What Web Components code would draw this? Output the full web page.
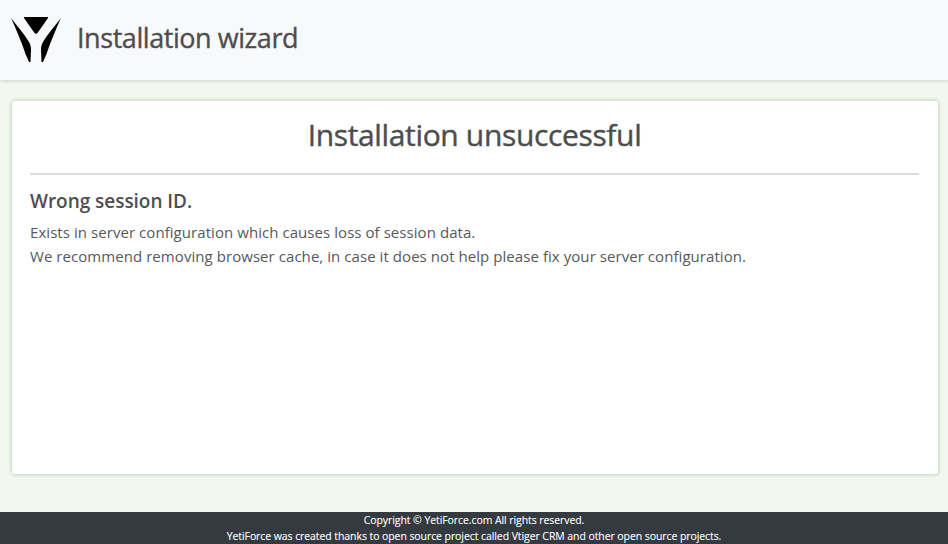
<!DOCTYPE html>
<html lang="en"><head><meta charset="utf-8"><title>Installation wizard</title>
<style>
html,body{margin:0;padding:0;height:100%}
body{font-family:"Open Sans","Noto Sans",sans-serif;color:#495057;background:#f3f8ee}
</style></head><body>
<template id="t-page"><style>
:host{display:flex;flex-direction:column;height:544px;overflow:hidden}
main{flex:1;display:flex;flex-direction:column;padding:21px 10px 38px 12px;min-height:0}
</style><slot name="header"></slot><main><slot></slot></main><slot name="footer"></slot></template>
<template id="t-header"><style>
:host{display:flex;align-items:center;gap:16px;height:80px;box-sizing:border-box;padding:0 0 4px 11px;background:#f8f9fa;box-shadow:0 1px 3px rgba(0,0,0,.16);position:relative;font-family:"Open Sans",sans-serif}
svg{display:block;flex:none;margin-top:4px}
h1{margin:0;font-size:27px;font-weight:400;color:#4d4d4d;letter-spacing:-.44px;line-height:1.2;-webkit-text-stroke:.35px #4d4d4d}
</style><svg width="50" height="46" viewBox="11 18 50 46"><path d="M25.500 17H46.500C48 17 48.600 18 47.800 19.200L37.500 34C36.700 35 35.300 35 34.500 34L24.200 19.200C23.400 18 24 17 25.500 17Z" fill="#000"/><path d="M11 19C15 24 25 36 29 43C30.600 45.800 31 48 31 51L30.500 63H29L25.500 55C21.500 43 16 30 11 19Z" fill="#000"/><path d="M61 19C57 24 47 36 43 43C41.400 45.800 41 48 41 51L41.500 63H43L46.500 55C50.500 43 56 30 61 19Z" fill="#000"/></svg><h1><slot></slot></h1></template>
<template id="t-card"><style>
:host{display:block;flex:1;background:#fff;border-radius:3px;box-shadow:0 0 4px rgba(0,0,0,.25);padding:15px 19px 0 18px;box-sizing:border-box;font-family:"Open Sans",sans-serif}
h2{margin:0;text-align:center;font-size:30px;font-weight:400;line-height:38px;color:#4d4d4d;letter-spacing:-.35px;-webkit-text-stroke:.4px #4d4d4d}
hr{border:0;height:2px;background:#dcdcdf;margin:19px 0 14px}
h4{margin:0 0 6px;font-size:19px;font-weight:600;line-height:25px;color:#4f4f4f;letter-spacing:-.04px}
</style><h2><slot name="title"></slot></h2><hr><h4><slot name="subtitle"></slot></h4><slot></slot></template>
<template id="t-line"><style>
:host{display:block;font-size:15px;line-height:24px;color:#56595c;letter-spacing:.06px;white-space:nowrap;font-family:"Open Sans",sans-serif}
</style><slot></slot></template>
<template id="t-footer"><style>
:host{display:block;height:32px;background:#343a40;color:#fff;text-align:center;font-size:10.500px;line-height:16px;overflow:hidden;font-family:"Open Sans",sans-serif;letter-spacing:-.08px;-webkit-text-stroke:.1px #fff}
div{white-space:nowrap}
</style><div><slot name="a"></slot></div><div><slot name="b"></slot></div></template>
<yf-page>
<yf-header slot="header">Installation wizard</yf-header>
<yf-card>
<span slot="title">Installation unsuccessful</span>
<span slot="subtitle">Wrong session ID.</span>
<yf-line>Exists in server configuration which causes loss of session data.</yf-line>
<yf-line>We recommend removing browser cache, in case it does not help please fix your server configuration.</yf-line>
</yf-card>
<yf-footer slot="footer"><span slot="a">Copyright © YetiForce.com All rights reserved.</span><span slot="b">YetiForce was created thanks to open source project called Vtiger CRM and other open source projects.</span></yf-footer>
</yf-page>
<script>
for (const [tag,tpl] of [['yf-page','t-page'],['yf-header','t-header'],['yf-card','t-card'],['yf-line','t-line'],['yf-footer','t-footer']]) {
  customElements.define(tag, class extends HTMLElement {
    constructor(){super();this.attachShadow({mode:'open'}).appendChild(document.getElementById(tpl).content.cloneNode(true));}
  });
}
</script>
</body></html>
